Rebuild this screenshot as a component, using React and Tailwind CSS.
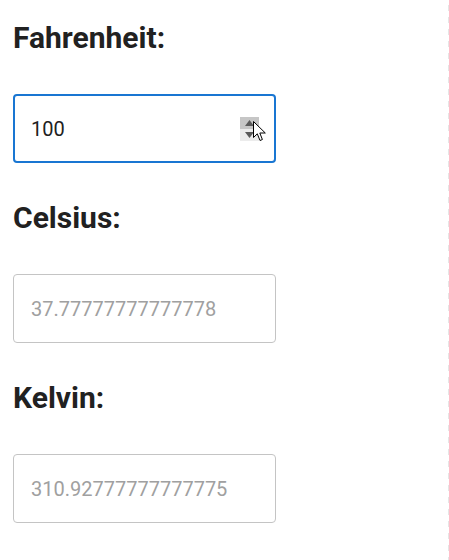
import React from "react";

function Spinner() {
  return (
    <div className="absolute left-[227px] top-[23px] w-[19px] h-[24px] flex flex-col">
      <div className="flex-1 bg-[#c6c6c6] flex items-center justify-center">
        <svg width="9" height="6" viewBox="0 0 9 6"><path d="M0 6 L4.5 0 L9 6 Z" fill="#5a5a5a" /></svg>
      </div>
      <div className="flex-1 bg-[#ececec] flex items-center justify-center">
        <svg width="9" height="6" viewBox="0 0 9 6"><path d="M0 0 L4.5 6 L9 0 Z" fill="#5a5a5a" /></svg>
      </div>
    </div>
  );
}

function Cursor() {
  return (
    <svg className="absolute left-[240px] top-[27px]" width="14" height="22" viewBox="0 0 14 22">
      <path d="M0.5 0.5 L0.5 16.5 L4.3 12.8 L7 19.5 L9.4 18.5 L6.8 12 L12.3 12 Z" fill="#ffffff" stroke="#000000" strokeWidth="1" strokeLinejoin="round" />
    </svg>
  );
}

function Field({ label, value, placeholder, focused }) {
  return (
    <div className="mb-[37px]">
      <h1 className="text-[30px] leading-[36px] font-bold text-[#212121] mb-[38px]">{label}</h1>
      <div className="relative w-[263px] h-[69px]">
        <input
          type="text"
          readOnly
          value={value}
          placeholder={placeholder}
          className={
            focused
              ? "w-full h-full rounded-[4px] border-2 border-[#1976d2] pl-[16px] text-[20px] text-[#212121] outline-none bg-white"
              : "w-full h-full rounded-[4px] border border-[#c4c4c4] pl-[17px] text-[20px] text-[#212121] placeholder:text-[#a0a0a0] outline-none bg-white"
          }
        />
        {focused && <Spinner />}
        {focused && <Cursor />}
      </div>
    </div>
  );
}

export default function App() {
  return (
    <div className="flex w-[449px] h-[560px] bg-white overflow-hidden font-['Roboto',sans-serif]">
      <div className="flex-1 pl-[13px] pt-[20px]">
        <Field label="Fahrenheit:" value="100" focused />
        <Field label="Celsius:" value="" placeholder="37.77777777777778" />
        <Field label="Kelvin:" value="" placeholder="310.92777777777775" />
      </div>
      <div className="w-px h-full bg-[repeating-linear-gradient(to_bottom,#e6e6e6_0px,#e6e6e6_6px,transparent_6px,transparent_12px)] mt-[5px]" />
    </div>
  );
}
